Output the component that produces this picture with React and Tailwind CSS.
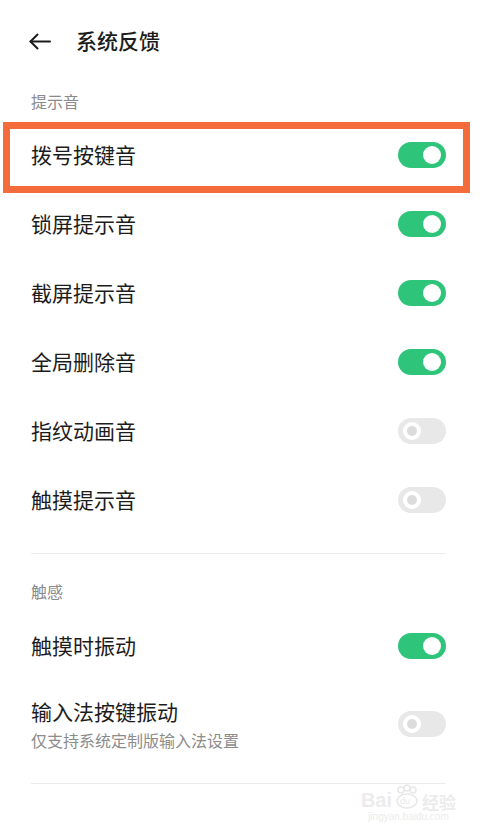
import React from "react";

const Toggle = ({ on }) =>
  on ? (
    <div className="w-[48px] h-[26px] rounded-full bg-[#2ec57b] flex items-center justify-end pr-[5px]">
      <div className="w-[18px] h-[18px] rounded-full bg-white" />
    </div>
  ) : (
    <div className="w-[48px] h-[26px] rounded-full bg-[#e8e8e8] flex items-center pl-[5px]">
      <div className="w-[18px] h-[18px] rounded-full bg-white flex items-center justify-center">
        <div className="w-[10px] h-[10px] rounded-full bg-[#dcdcdc]" />
      </div>
    </div>
  );

const Row = ({ label, on, children }) => (
  <div className="relative h-[69px] flex items-center justify-between">
    <span className="text-[21px] text-[#1c1c1c]">{label}</span>
    <Toggle on={on} />
    {children}
  </div>
);

const Watermark = () => (
  <div className="absolute right-[26px] bottom-[14px] flex flex-col items-center text-[#ececec] pointer-events-none">
    <div className="flex items-end gap-[2px] leading-none">
      <span className="text-[20px] font-bold font-['Liberation_Sans',sans-serif]">Bai</span>
      <svg width="26" height="26" viewBox="0 0 26 26" fill="none" stroke="#e8e8e8" strokeWidth="1.5">
        <circle cx="7" cy="6" r="3" />
        <circle cx="13" cy="4" r="3" />
        <circle cx="19" cy="6" r="3" />
        <ellipse cx="13" cy="17" rx="10" ry="7" />
        <text x="6" y="20" fontSize="9" fill="#e8e8e8" stroke="none" fontFamily="Liberation Sans">du</text>
      </svg>
      <span className="text-[17px] font-bold">经验</span>
    </div>
    <span className="text-[10px] leading-[14px] font-['Liberation_Sans',sans-serif]">jingyan.baidu.com</span>
  </div>
);

export default function App() {
  return (
    <div className="relative w-full min-h-screen bg-white font-['Noto_Sans_CJK_SC','Noto_Sans',sans-serif]">
      <div className="h-[82px] flex items-center px-[29px] gap-[25px]">
        <svg width="22" height="17" viewBox="0 0 22 17" fill="none" stroke="#1c1c1c" strokeWidth="2" strokeLinecap="round" strokeLinejoin="round">
          <path d="M1.5 8.5H21" />
          <path d="M8.5 1.5L1.5 8.5L8.5 15.5" />
        </svg>
        <span className="text-[21px] font-medium text-[#1c1c1c]">系统反馈</span>
      </div>

      <div className="pl-[31px] pr-[36px]">
        <div className="h-[38px] flex items-center text-[16px] text-[#8a8a8a]">提示音</div>

        <Row label="拨号按键音" on>
          <div className="absolute top-[2px] left-[-28px] right-[-24px] h-[71px] border-[7px] border-[#f46c3c]" />
        </Row>
        <Row label="锁屏提示音" on />
        <Row label="截屏提示音" on />
        <Row label="全局删除音" on />
        <Row label="指纹动画音" on={false} />
        <Row label="触摸提示音" on={false} />

        <div className="mt-[19px] h-px bg-[#ececec]" />

        <div className="mt-[27px] mb-[10px] h-[20px] flex items-center text-[16px] text-[#8a8a8a]">触感</div>
        <Row label="触摸时振动" on />

        <div className="pt-[17px] pb-[33px] flex items-center justify-between">
          <div className="flex flex-col">
            <span className="text-[21px] leading-[28px] text-[#1c1c1c]">输入法按键振动</span>
            <span className="mt-[5px] text-[16px] leading-[20px] text-[#8c8c8c]">仅支持系统定制版输入法设置</span>
          </div>
          <Toggle on={false} />
        </div>

        <div className="h-px bg-[#ececec]" />
      </div>

      <Watermark />
    </div>
  );
}
